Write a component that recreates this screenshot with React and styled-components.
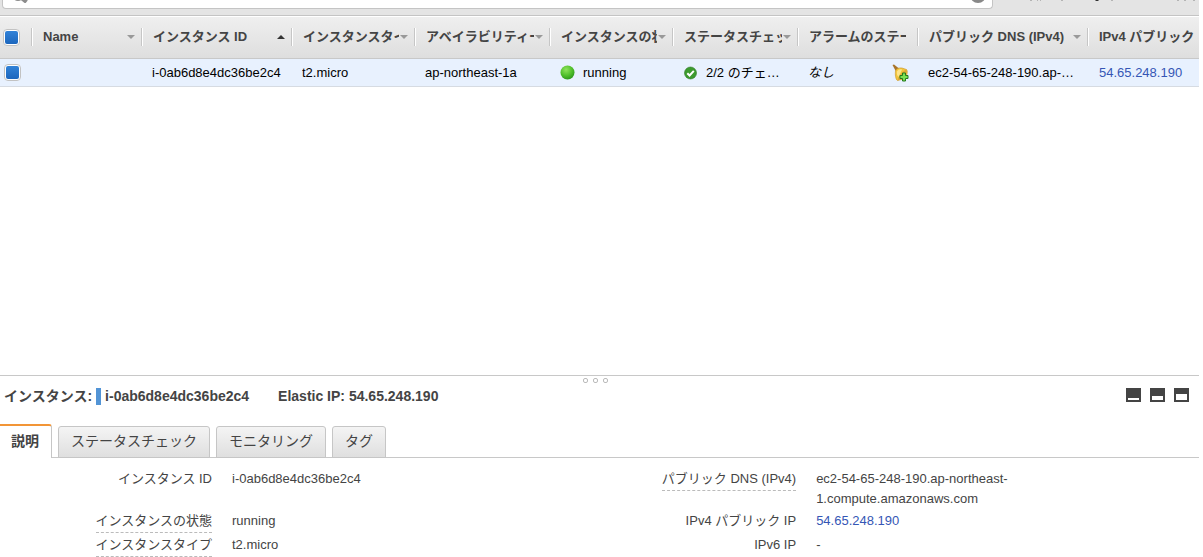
import { useState } from 'react';
import styled, { createGlobalStyle, css } from 'styled-components';

const columns = [
    { label: 'Name', width: 110, sort: 'down' },
    { label: 'インスタンス ID', width: 150, sort: 'up' },
    { label: 'インスタンスタイプ', width: 123, sort: 'down' },
    { label: 'アベイラビリティーゾーン', width: 135, sort: 'down' },
    { label: 'インスタンスの状態', width: 123, sort: 'down' },
    { label: 'ステータスチェック', width: 125, sort: 'down' },
    { label: 'アラームのステータス', width: 120 },
    { label: 'パブリック DNS (IPv4)', width: 170, sort: 'down' },
    { label: 'IPv4 パブリック IP', last: true }
];

const tabs = ['説明', 'ステータスチェック', 'モニタリング', 'タグ'];

const fields = [
    { label: 'インスタンス ID', value: 'i-0ab6d8e4dc36be2c4' },
    { label: 'パブリック DNS (IPv4)', value: 'ec2-54-65-248-190.ap-northeast-1.compute.amazonaws.com', hint: true },
    { label: 'インスタンスの状態', value: 'running', hint: true },
    { label: 'IPv4 パブリック IP', value: '54.65.248.190', link: true },
    { label: 'インスタンスタイプ', value: 't2.micro', hint: true },
    { label: 'IPv6 IP', value: '-' }
];

export default function App() {
    const [selected, setSelected] = useState(true);
    const [activeTab, setActiveTab] = useState(0);
    const [search, setSearch] = useState('');

    function toggleSelected() {
        setSelected(!selected);
    }

    return (
        <Page>
            <GlobalStyle />
            <Toolbar>
                <SearchBox>
                    <SearchIcon />
                    <SearchInput
                        type='text'
                        aria-label='検索'
                        value={search}
                        onChange={e => setSearch(e.target.value)}
                    />
                    <ClearButton type='button' aria-label='クリア' onClick={() => setSearch('')} />
                </SearchBox>
                <PagerMarks />
            </Toolbar>
            <ListArea>
                <Table>
                    <colgroup>
                        <Col $width={31} />
                        {columns.map(column => <Col key={column.label} $width={column.width} />)}
                    </colgroup>
                    <thead>
                        <tr>
                            <Th>
                                <CheckCell $left={4}>
                                    <Check type='checkbox' aria-label='すべて選択' checked={selected} onChange={toggleSelected} />
                                </CheckCell>
                            </Th>
                            {columns.map(column =>
                                <Th key={column.label}>
                                    <HeadButton type='button' $sortable={column.sort} $last={column.last}>
                                        <HeadLabel>{column.label}</HeadLabel>
                                        {column.sort && <Arrow $up={column.sort === 'up'} />}
                                    </HeadButton>
                                </Th>
                            )}
                        </tr>
                    </thead>
                    <tbody>
                        <tr>
                            <Td>
                                <CheckCell $left={5}>
                                    <Check type='checkbox' aria-label='i-0ab6d8e4dc36be2c4' checked={selected} onChange={toggleSelected} />
                                </CheckCell>
                            </Td>
                            <Td />
                            <Td><CellText>i-0ab6d8e4dc36be2c4</CellText></Td>
                            <Td><CellText>t2.micro</CellText></Td>
                            <Td><CellText>ap-northeast-1a</CellText></Td>
                            <Td>
                                <IconCell>
                                    <RunningIcon />
                                    <CellText>running</CellText>
                                </IconCell>
                            </Td>
                            <Td>
                                <IconCell>
                                    <PassedIcon />
                                    <CellText>2/2 のチェックに合格しました</CellText>
                                </IconCell>
                            </Td>
                            <Td>
                                <AlarmCell>
                                    <em>なし</em>
                                    <BellButton type='button' aria-label='アラームの追加'><BellIcon /></BellButton>
                                </AlarmCell>
                            </Td>
                            <Td><CellText>ec2-54-65-248-190.ap-northeast-1.compute.amazonaws.com</CellText></Td>
                            <Td><CellText><Link href='#'>54.65.248.190</Link></CellText></Td>
                        </tr>
                    </tbody>
                </Table>
            </ListArea>
            <Details>
                <Splitter>
                    <Grip />
                    <Grip />
                    <Grip />
                </Splitter>
                <DetailsHeader>
                    <span>インスタンス:</span>
                    <Marker />
                    <span>i-0ab6d8e4dc36be2c4</span>
                    <ElasticIp>Elastic IP: 54.65.248.190</ElasticIp>
                    <PaneButtons>
                        <PaneButton type='button' aria-label='最小化'><PaneIcon level={2} /></PaneButton>
                        <PaneButton type='button' aria-label='分割'><PaneIcon level={4} /></PaneButton>
                        <PaneButton type='button' aria-label='最大化'><PaneIcon level={6} /></PaneButton>
                    </PaneButtons>
                </DetailsHeader>
                <TabBar role='tablist'>
                    {tabs.map((tab, index) =>
                        <Tab
                            key={tab}
                            type='button'
                            role='tab'
                            aria-selected={index === activeTab}
                            $active={index === activeTab}
                            onClick={() => setActiveTab(index)}
                        >{tab}</Tab>
                    )}
                </TabBar>
                <Fields>
                    {fields.map(field =>
                        <Field key={field.label}>
                            <FieldLabel><Hint $dashed={field.hint}>{field.label}</Hint></FieldLabel>
                            <FieldValue>
                                {field.link ? <Link href='#'>{field.value}</Link> : field.value}
                            </FieldValue>
                        </Field>
                    )}
                </Fields>
            </Details>
        </Page>
    );
}

function SearchIcon() {
    return (
        <svg width='18' height='18' viewBox='0 0 18 18' fill='none' stroke='#8c8c8c'>
            <circle cx='7' cy='10' r='5' strokeWidth='2' />
            <path d='M10.500 13l5 4' strokeWidth='4' />
        </svg>
    );
}

function PagerMarks() {
    return (
        <svg width='184' height='3' viewBox='0 0 184 3' fill='#b4b4b4'>
            <path d='M15 0h2v1h-2zM22 0h1v1h-1zM25 0h1v1h-1zM46 0h2v1h-2zM96 0h2v1h-2zM162 0h2v1h-2zM169 0h2v1h-2zM178 0h2v1h-2z' />
            <path d='M80 0h4l-1 1h-2z' fill='#333' />
        </svg>
    );
}

function RunningIcon() {
    return (
        <svg width='15' height='15' viewBox='0 0 15 15'>
            <defs>
                <radialGradient id='running' cx='0.4' cy='0.3' r='0.7'>
                    <stop offset='0' stopColor='#8fe35c' />
                    <stop offset='0.6' stopColor='#51c02c' />
                    <stop offset='1' stopColor='#2f9c1c' />
                </radialGradient>
            </defs>
            <circle cx='7.5' cy='7.5' r='7' fill='url(#running)' />
        </svg>
    );
}

function PassedIcon() {
    return (
        <svg width='15' height='14' viewBox='0 0 15 14'>
            <circle cx='7.500' cy='7' r='6' fill='#3c9a2e' stroke='#2a7a22' strokeWidth='0.6' />
            <path d='M4.300 7.200l2.300 2.300 4.200-4.600' fill='none' stroke='#fff' strokeWidth='2' />
        </svg>
    );
}

function BellIcon() {
    return (
        <svg width='18' height='18' viewBox='0 0 18 18'>
            <path d='M1.500 1l1.500-.4 5 3.900-3 3z' fill='#a8742a' />
            <path d='M4.500 7C5 4.500 8 3.500 11 4L15.500 5.500C17 7 16.500 12 12.500 15L6.500 16.500C4.500 15.500 4 10 4.500 7z' fill='#f2c53a' stroke='#c99327' strokeWidth='0.6' />
            <path d='M6 7.500C7 5.500 9 5 11 5.500L7.500 13C6 11.500 5.500 9.500 6 7.500z' fill='#fde48a' />
            <path d='M6.500 16.500C7.500 12 11.500 7 15.500 5.500c1 2.500-1 7.500-4 9.500z' fill='#dba836' />
            <path d='M11.500 9h3v2.500h2.500v3h-2.500v2.500h-3v-2.500h-2.500v-3h2.500z' fill='#7be052' stroke='#237a1c' />
        </svg>
    );
}

function PaneIcon({ level }) {
    return (
        <svg width='15' height='14' viewBox='0 0 15 14'>
            <path d='M0 0h15v14h-15z' fill='#444' />
            <rect x='2' y={12 - level} width='11' height={level} fill='#fff' />
        </svg>
    );
}

const GlobalStyle = createGlobalStyle`
    * {
        box-sizing: border-box;
    }
    body {
        margin: 0;
        background: #fff;
        color: #444;
        font-family: "Liberation Sans", Arial, "Noto Sans CJK JP", sans-serif;
        font-size: 13px;
        line-height: 20px;
    }
    button, input {
        font: inherit;
        color: inherit;
    }
    svg {
        display: block;
        flex: none;
    }
`;

const Page = styled.div`
    display: flex;
    flex-direction: column;
    min-height: 100vh;
    padding-right: 4px;
`;

const Toolbar = styled.header`
    display: flex;
    height: 16px;
    padding: 0 0 6px 2px;
    gap: 22px;
    background: #e4e4e4;
    border-bottom: 1px solid #c4c4c4;
`;

const SearchBox = styled.div`
    display: flex;
    flex: 1;
    align-items: flex-end;
    padding: 0 6px 5px 8px;
    background: #fff;
    border: 1px solid #c4c4c4;
    border-top: 0;
    border-radius: 0 0 4px 4px;
`;

const SearchInput = styled.input`
    flex: 1;
    min-width: 0;
    height: 3px;
    padding: 0 8px;
    border: 0;
    outline: 0;
    background: transparent;
`;

const ClearButton = styled.button`
    width: 16px;
    height: 16px;
    padding: 0;
    border: 0;
    border-radius: 50%;
    background: #888;
`;

const ListArea = styled.main`
    flex: 1;
    overflow: hidden;
`;

const Table = styled.table`
    width: 100%;
    table-layout: fixed;
    border-collapse: separate;
    border-spacing: 0;
`;

const Col = styled.col`
    width: ${props => props.$width ? `${props.$width}px` : 'auto'};
`;

const Th = styled.th`
    height: 43px;
    padding: 0 0 1px;
    overflow: hidden;
    background: linear-gradient(#efefef, #dedede);
    border-top: 1px solid #fff;
    border-bottom: 1px solid #c8c8c8;
    text-align: left;
`;

const Td = styled.td`
    height: 28px;
    padding: 0 0 0 11px;
    overflow: hidden;
    background: #e8f1fe;
    border-bottom: 1px solid #d6dbe2;
    color: #000;

    &:first-child {
        padding: 0;
    }
    &:last-child {
        padding-left: 12px;
    }
`;

const CheckCell = styled.div`
    padding-left: ${props => props.$left}px;
`;

const Check = styled.input`
    display: block;
    appearance: none;
    width: 17px;
    height: 17px;
    margin: 0 0 0 -1px;
    background: #fff;
    border: 1px solid #c2c2c2;
    border-radius: 4px;

    &:checked {
        background: linear-gradient(#3182d8, #1c66bd) content-box, #fff;
        padding: 1px;
    }
`;

const HeadButton = styled.button`
    display: flex;
    align-items: center;
    width: 100%;
    height: 18px;
    padding: 0 ${props => props.$last ? 0 : props.$sortable ? 6 : 10}px 0 11px;
    background: transparent;
    border: 0;
    border-left: 1px solid #c6c6c6;
    box-shadow: inset 1px 0 #fff;
    text-align: left;
    font-weight: bold;
    line-height: 18px;
`;

const HeadLabel = styled.span`
    flex: 1;
    min-width: 0;
    margin-right: 1px;
    overflow: hidden;
    white-space: nowrap;
`;

const Arrow = styled.span`
    flex: none;
    border: 4px solid transparent;
    border-top: 4px solid #999;
    border-bottom: 0;

    ${props => props.$up && css`
        border-top: 0;
        border-bottom: 4px solid #333;
    `}
`;

const CellText = styled.div`
    min-width: 0;
    padding-right: 10px;
    overflow: hidden;
    white-space: nowrap;
    text-overflow: ellipsis;
`;

const IconCell = styled.div`
    display: flex;
    align-items: center;
    gap: 8px;
`;

const AlarmCell = styled.div`
    display: flex;
    align-items: center;
    justify-content: space-between;
    padding-right: 8px;
`;

const BellButton = styled.button`
    padding: 0;
    border: 0;
    background: transparent;
`;

const Link = styled.a`
    color: #3556b5;
    text-decoration: none;
`;

const Details = styled.section`
    border-top: 1px solid #c8c8c8;
`;

const Splitter = styled.div`
    display: flex;
    justify-content: center;
    gap: 5px;
    height: 8px;
    padding: 2px 8px 1px 0;
`;

const Grip = styled.span`
    width: 5px;
    height: 5px;
    border: 1px solid #bbb;
    border-radius: 2px;
`;

const DetailsHeader = styled.div`
    display: flex;
    align-items: center;
    height: 24px;
    padding: 0 10px 0 4px;
    font-size: 14px;
    font-weight: bold;
`;

const Marker = styled.span`
    width: 5px;
    height: 17px;
    margin: 0 4px;
    background: #5294d6;
`;

const ElasticIp = styled.span`
    margin-left: 29px;
`;

const PaneButtons = styled.div`
    display: flex;
    gap: 9px;
    margin-left: auto;
    padding-bottom: 2px;
`;

const PaneButton = styled.button`
    padding: 0;
    border: 0;
    background: transparent;
`;

const TabBar = styled.div`
    display: flex;
    align-items: flex-end;
    gap: 6px;
    height: 34px;
    margin-top: 16px;
    box-shadow: inset 0 -1px #c8c8c8;
`;

const Tab = styled.button`
    height: 32px;
    padding: 0 12px 2px;
    background: linear-gradient(#f4f4f4, #dfdfdf);
    border: 1px solid #c6c6c6;
    border-radius: 3px 3px 0 0;
    font-size: 14px;

    ${props => props.$active && css`
        height: 34px;
        padding: 0 12px 2px 11px;
        background: #fff;
        border-top: 2px solid #f29536;
        border-bottom: 0;
        border-left: 0;
        border-radius: 0 3px 0 0;
        font-weight: bold;
    `}
`;

const Fields = styled.dl`
    display: grid;
    grid-template-columns: 19fr 20fr;
    row-gap: 2px;
    margin: 0;
    padding-top: 11px;
`;

const Field = styled.div`
    display: flex;
    gap: 20px;
`;

const FieldLabel = styled.dt`
    width: 212px;
    text-align: right;
`;

const Hint = styled.span`
    display: inline-block;
    padding-bottom: 1px;
    border-bottom: 1px dashed ${props => props.$dashed ? '#bbb' : 'transparent'};
    vertical-align: top;
`;

const FieldValue = styled.dd`
    width: 200px;
    margin: 0;
`;
